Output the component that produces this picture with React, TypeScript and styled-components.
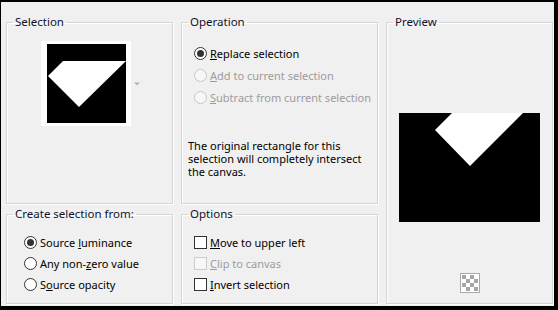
import styled, { createGlobalStyle } from 'styled-components';

const Global = createGlobalStyle`
  html, body {
    margin: 0;
    padding: 0;
    background: #f0f0f0;
  }
  * {
    box-sizing: border-box;
  }
`;

const Window = styled.div`
  width: 558px;
  height: 310px;
  background: #f0f0f0;
  border-style: solid;
  border-color: #000;
  border-width: 2px 4px 4px 1px;
  padding: 13px 0 0 5px;
  display: grid;
  grid-template-columns: 167px 197px 167px;
  grid-template-rows: 189px 97px;
  column-gap: 8px;
  row-gap: 3px;
  font-family: "Noto Sans", "Open Sans", sans-serif;
  font-size: 11px;
  color: #000;
`;

const Group = styled.fieldset<{ $col: number; $row: string }>`
  margin: 0;
  padding: 0;
  min-width: 0;
  border: 1px solid #d5d5d5;
  box-shadow: inset 1px 1px 0 #fff, 1px 1px 0 #fff;
  grid-column: ${(p) => p.$col};
  grid-row: ${(p) => p.$row};
`;

const Legend = styled.legend`
  margin-left: 6px;
  padding: 0 2px;
  font-size: 11.5px;
  line-height: 14px;
  color: #10102e;
`;

const Body = styled.div<{ $top: number; $left: number; $center?: boolean }>`
  display: flex;
  flex-direction: column;
  align-items: ${(p) => (p.$center ? 'center' : 'stretch')};
  padding: ${(p) => `${p.$top}px 0 0 ${p.$left}px`};
`;

const ThumbRow = styled.div`
  display: flex;
  align-items: center;
  gap: 3px;
`;

const ThumbFrame = styled.div`
  display: flex;
  background: #fff;
  padding: 3px 5px 3px 6px;

  svg {
    display: block;
  }
`;

const PreviewImage = styled.svg`
  display: block;
  flex: none;
`;

const Row = styled.label<{ $h: number; $disabled?: boolean }>`
  display: flex;
  align-items: center;
  gap: 3px;
  height: ${(p) => p.$h}px;
  color: ${(p) => (p.$disabled ? '#9c9c9c' : '#000')};
  white-space: nowrap;
`;

const Radio = styled.span<{ $checked?: boolean; $disabled?: boolean }>`
  position: relative;
  flex: none;
  width: 13px;
  height: 13px;
  border-radius: 50%;
  border: 1px solid ${(p) => (p.$disabled ? '#c6c6c6' : '#333')};
  background: ${(p) => (p.$disabled ? '#f7f7f7' : '#fff')};

  &::after {
    content: '';
    display: ${(p) => (p.$checked ? 'block' : 'none')};
    position: absolute;
    left: 2px;
    top: 2px;
    width: 7px;
    height: 7px;
    border-radius: 50%;
    background: #333;
  }
`;

const Check = styled.span<{ $disabled?: boolean }>`
  flex: none;
  width: 13px;
  height: 13px;
  border: 1px solid ${(p) => (p.$disabled ? '#cccccc' : '#333')};
  background: ${(p) => (p.$disabled ? '#f7f7f7' : '#fff')};
`;

const Key = styled.span`
  text-decoration: underline;
  text-underline-offset: 1px;
`;

const Note = styled.p`
  margin: 31px 0 0 -6px;
  line-height: 13px;
  white-space: nowrap;
`;

const Checker = styled.div`
  width: 20px;
  height: 20px;
  margin-top: 51px;
  border: 1px solid #a9a9a9;
  padding: 1px;
  background: #fff;

  svg {
    display: block;
  }
`;

const DropArrow = () => (
  <svg width="6" height="4" viewBox="0 0 6 4">
    <path d="M0 0.5 H6 L3 3.5 Z" fill="#b4b4b4" />
  </svg>
);

const CheckerGlyph = () => {
  const cells = [];
  for (let r = 0; r < 4; r++) {
    for (let c = 0; c < 4; c++) {
      if ((r + c) % 2 === 0) cells.push(<rect key={`${r}-${c}`} x={c * 4} y={r * 4} width="4" height="4" fill="#a6a6a6" />);
    }
  }
  return (
    <svg width="16" height="16" viewBox="0 0 16 16">
      {cells}
    </svg>
  );
};

export default function App() {
  return (
    <>
      <Global />
      <Window>
        <Group $col={1} $row="1">
          <Legend>Selection</Legend>
          <Body $top={12} $left={34}>
            <ThumbRow>
              <ThumbFrame>
                <svg width="79" height="79" viewBox="0 0 79 79">
                  <rect width="79" height="79" fill="#000" />
                  <polygon points="16,17 79,17 32,63 1,32" fill="#fff" />
                </svg>
              </ThumbFrame>
              <DropArrow />
            </ThumbRow>
          </Body>
        </Group>

        <Group $col={2} $row="1">
          <Legend>Operation</Legend>
          <Body $top={13} $left={12}>
            <Row $h={22}>
              <Radio $checked />
              <span><Key>R</Key>eplace selection</span>
            </Row>
            <Row $h={22} $disabled>
              <Radio $disabled />
              <span><Key>A</Key>dd to current selection</span>
            </Row>
            <Row $h={22} $disabled>
              <Radio $disabled />
              <span><Key>S</Key>ubtract from current selection</span>
            </Row>
            <Note>
              The original rectangle for this<br />
              selection will completely intersect<br />
              the canvas.
            </Note>
          </Body>
        </Group>

        <Group $col={3} $row="1 / span 2">
          <Legend>Preview</Legend>
          <Body $top={84} $left={0} $center>
            <PreviewImage width="141" height="109" viewBox="0 0 141 109">
              <rect width="141" height="109" fill="#000" />
              <polygon points="53,0 124,0 71,53 36,17" fill="#fff" />
            </PreviewImage>
            <Checker>
              <CheckerGlyph />
            </Checker>
          </Body>
        </Group>

        <Group $col={1} $row="2">
          <Legend>Create selection from:</Legend>
          <Body $top={11} $left={17}>
            <Row $h={21}>
              <Radio $checked />
              <span>Source <Key>l</Key>uminance</span>
            </Row>
            <Row $h={21}>
              <Radio />
              <span>Any non-<Key>z</Key>ero value</span>
            </Row>
            <Row $h={21}>
              <Radio />
              <span>S<Key>o</Key>urce opacity</span>
            </Row>
          </Body>
        </Group>

        <Group $col={2} $row="2">
          <Legend>Options</Legend>
          <Body $top={11} $left={12}>
            <Row $h={21}>
              <Check />
              <span><Key>M</Key>ove to upper left</span>
            </Row>
            <Row $h={21} $disabled>
              <Check $disabled />
              <span><Key>C</Key>lip to canvas</span>
            </Row>
            <Row $h={21}>
              <Check />
              <span><Key>I</Key>nvert selection</span>
            </Row>
          </Body>
        </Group>
      </Window>
    </>
  );
}
